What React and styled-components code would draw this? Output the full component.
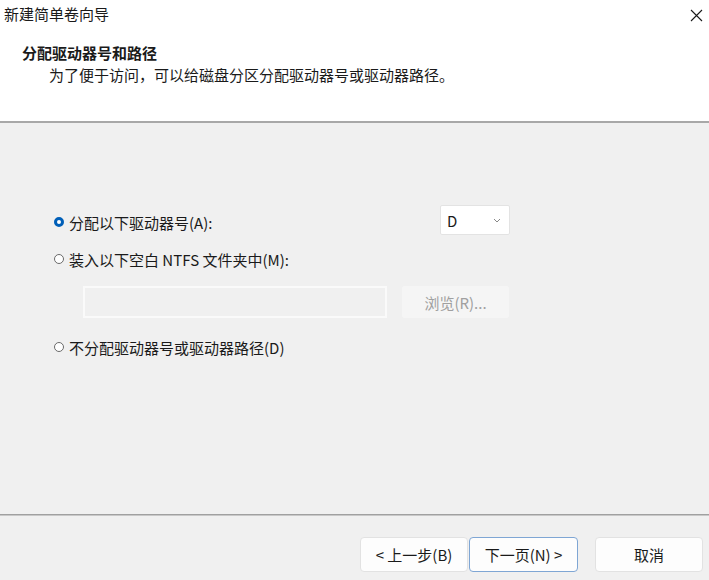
import styled, { createGlobalStyle } from 'styled-components';

const GlobalStyle = createGlobalStyle`
    body {
        margin: 0;
        background: #f0f0f0;
        font-family: "Noto Sans CJK SC", "Noto Sans", sans-serif;
        color: #1a1a1a;
    }
`;

const Radio = ({ checked }) => <RadioDot $checked={checked} />;

const App = () => {
    return (
        <Window>
            <GlobalStyle />
            {/* header */}
            <Header>
                <TitleBar>
                    <Title>新建简单卷向导</Title>
                    <Close>
                        <svg width="13" height="13" viewBox="0 0 13 13">
                            <path d="M1 1 L12 12 M12 1 L1 12" stroke="#1a1a1a" strokeWidth="1.1" fill="none" />
                        </svg>
                    </Close>
                </TitleBar>
                <Heading>分配驱动器号和路径</Heading>
                <SubHeading>为了便于访问，可以给磁盘分区分配驱动器号或驱动器路径。</SubHeading>
            </Header>

            {/* content */}
            <Content>
                <FirstRow>
                    <Option $offset={6}>
                        <Radio checked />
                        分配以下驱动器号(A):
                    </Option>
                    <Select>
                        D
                        <svg width="8" height="5" viewBox="0 0 8 5">
                            <path d="M1 1 L4 4 L7 1" stroke="#888" strokeWidth="1" fill="none" />
                        </svg>
                    </Select>
                </FirstRow>
                <Option $top={13}>
                    <Radio />
                    装入以下空白 NTFS 文件夹中(M):
                </Option>
                <PathRow>
                    <PathInput disabled />
                    <Browse disabled>浏览(R)...</Browse>
                </PathRow>
                <Option $top={18}>
                    <Radio />
                    不分配驱动器号或驱动器路径(D)
                </Option>
            </Content>

            {/* footer */}
            <Footer>
                <Button>&lt; 上一步(B)</Button>
                <Button $primary>下一页(N) &gt;</Button>
                <Button $gap={17}>取消</Button>
            </Footer>
        </Window>
    );
};

export default App;

const Window = styled.div`
    width: 709px;
    height: 580px;
    display: flex;
    flex-direction: column;
    overflow: hidden;
`;

const Header = styled.div`
    background: #ffffff;
    height: 121px;
    border-bottom: 2px solid #a8a8a8;
    box-sizing: content-box;
`;

const TitleBar = styled.div`
    height: 28px;
    display: flex;
    align-items: center;
    justify-content: space-between;
    padding: 0 6px 0 4px;
`;

const Title = styled.div`
    font-size: 15px;
    line-height: 28px;
`;

const Close = styled.div`
    display: flex;
    align-items: center;
    padding-top: 2px;
`;

const Heading = styled.div`
    margin-top: 14px;
    padding-left: 22px;
    font-size: 15px;
    font-weight: bold;
    line-height: 22px;
`;

const SubHeading = styled.div`
    padding-left: 49px;
    font-size: 15px;
    line-height: 22px;
`;

const Content = styled.div`
    flex: 1;
    padding: 82px 0 0 54px;
    display: flex;
    flex-direction: column;
    align-items: flex-start;
`;

const FirstRow = styled.div`
    width: 456px;
    height: 30px;
    display: flex;
    justify-content: space-between;
    align-items: flex-start;
`;

const Option = styled.div`
    display: flex;
    align-items: center;
    gap: 5px;
    height: 22px;
    font-size: 15px;
    margin-top: ${({ $top }) => $top || 0}px;
    padding-top: ${({ $offset }) => $offset || 0}px;
`;

const RadioDot = styled.span`
    width: 10px;
    height: 10px;
    box-sizing: border-box;
    border-radius: 50%;
    border: ${({ $checked }) => ($checked ? '3px solid #005fb8' : '1px solid #6a6a6a')};
    background: #ffffff;
    flex-shrink: 0;
`;

const Select = styled.div`
    width: 70px;
    height: 30px;
    box-sizing: border-box;
    background: #ffffff;
    border: 1px solid #e3e3e3;
    border-radius: 2px;
    display: flex;
    align-items: center;
    justify-content: space-between;
    padding: 0 8px 0 6px;
    font-size: 15px;
`;

const PathRow = styled.div`
    display: flex;
    gap: 15px;
    margin: 16px 0 0 29px;
`;

const PathInput = styled.input`
    width: 304px;
    height: 32px;
    box-sizing: border-box;
    background: #f0f0f0;
    border: 2px solid #fafafa;
    outline: none;
`;

const Browse = styled.button`
    width: 107px;
    height: 32px;
    background: #f5f5f5;
    border: 1px solid #f5f5f5;
    border-radius: 2px;
    color: #a0a0a0;
    font-family: inherit;
    font-size: 15px;
    padding: 0;
`;

const Footer = styled.div`
    height: 66px;
    flex-shrink: 0;
    border-top: 1px solid #a0a0a0;
    box-shadow: inset 0 1px 0 #c8c8c8;
    display: flex;
    justify-content: flex-end;
    align-items: flex-start;
    padding: 22px 6px 0 0;
    box-sizing: border-box;
`;

const Button = styled.button`
    width: ${({ $primary }) => ($primary ? 109 : 108)}px;
    height: 35px;
    margin-left: ${({ $gap }) => ($gap ? $gap : 1)}px;
    background: #fdfdfd;
    border: 1px solid ${({ $primary }) => ($primary ? '#7fa6d4' : '#e2e2e2')};
    border-radius: 4px;
    font-family: inherit;
    font-size: 15px;
    color: #1a1a1a;
    padding: 0;
`;
